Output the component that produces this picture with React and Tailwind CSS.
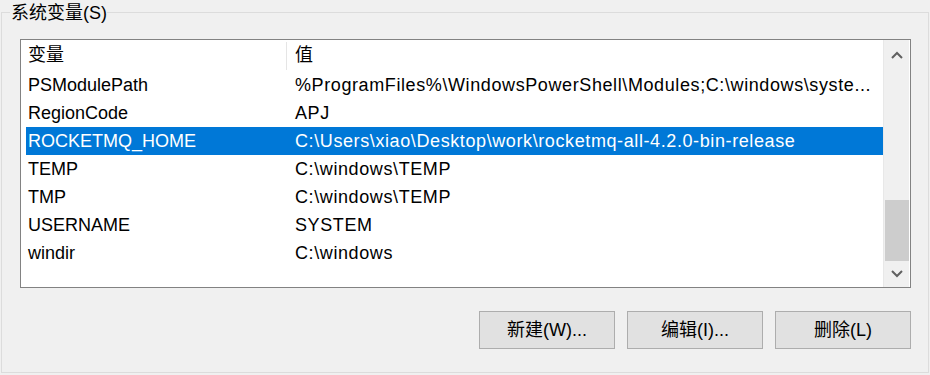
const rows = [
  ['PSModulePath', '%ProgramFiles%\\WindowsPowerShell\\Modules;C:\\windows\\syste...'],
  ['RegionCode', 'APJ'],
  ['ROCKETMQ_HOME', 'C:\\Users\\xiao\\Desktop\\work\\rocketmq-all-4.2.0-bin-release'],
  ['TEMP', 'C:\\windows\\TEMP'],
  ['TMP', 'C:\\windows\\TEMP'],
  ['USERNAME', 'SYSTEM'],
  ['windir', 'C:\\windows'],
]

const font = { fontFamily: '"Liberation Sans", "Noto Sans CJK SC", sans-serif' }

function Chevron({ up }) {
  return (
    <svg width="12" height="8" viewBox="0 0 12 8">
      <path
        d={up ? 'M1 7 L6 2 L11 7' : 'M1 1 L6 6 L11 1'}
        fill="none"
        stroke="#606060"
        strokeWidth="2"
      />
    </svg>
  )
}

export default function App() {
  return (
    <div className="w-[930px] h-[375px] bg-[#f0f0f0] overflow-hidden text-[18px] text-black" style={font}>
      <div className="relative ml-[1px] mt-[12px] w-[928px] h-[361px] border border-[#dcdcdc] pl-[18px] pr-[17px] pt-[26px]">
        <span className="absolute left-[8px] -top-[11px] bg-[#f0f0f0] pl-[1px] leading-[22px]">系统变量(S)</span>

        <div className="w-[891px] h-[249px] border border-[#828282] bg-white flex">
          <div className="w-[862px] pl-[5px]">
            <div className="flex h-[31px] items-center">
              <div className="w-[261px] pl-[2px] border-r border-[#e5e5e5] h-[28px] flex items-center">变量</div>
              <div className="pl-[8px]">值</div>
            </div>
            {rows.map(([name, value]) => {
              const selected = name === 'ROCKETMQ_HOME'
              return (
                <div
                  key={name}
                  className={`flex h-[28px] items-center whitespace-nowrap ${selected ? 'bg-[#0078d7] text-white' : ''}`}
                >
                  <div className="w-[261px] pl-[2px]">{name}</div>
                  <div className="pl-[8px] tracking-[0.6px]">{value}</div>
                </div>
              )
            })}
          </div>
          <div className="w-[26px] bg-[#f0f0f0] flex flex-col items-center border-l border-[#e8e8e8]">
            <div className="h-[30px] flex items-center justify-center">
              <Chevron up />
            </div>
            <div className="flex-1" />
            <div className="w-[24px] h-[61px] bg-[#cdcdcd]" />
            <div className="h-[26px] flex items-center justify-center">
              <Chevron />
            </div>
          </div>
        </div>

        <div className="flex justify-end gap-[12px] mt-[23px]">
          {['新建(W)...', '编辑(I)...', '删除(L)'].map((label) => (
            <button
              key={label}
              className="w-[136px] h-[38px] bg-[#e1e1e1] border border-[#adadad] flex items-center justify-center"
            >
              {label}
            </button>
          ))}
        </div>
      </div>
    </div>
  )
}
